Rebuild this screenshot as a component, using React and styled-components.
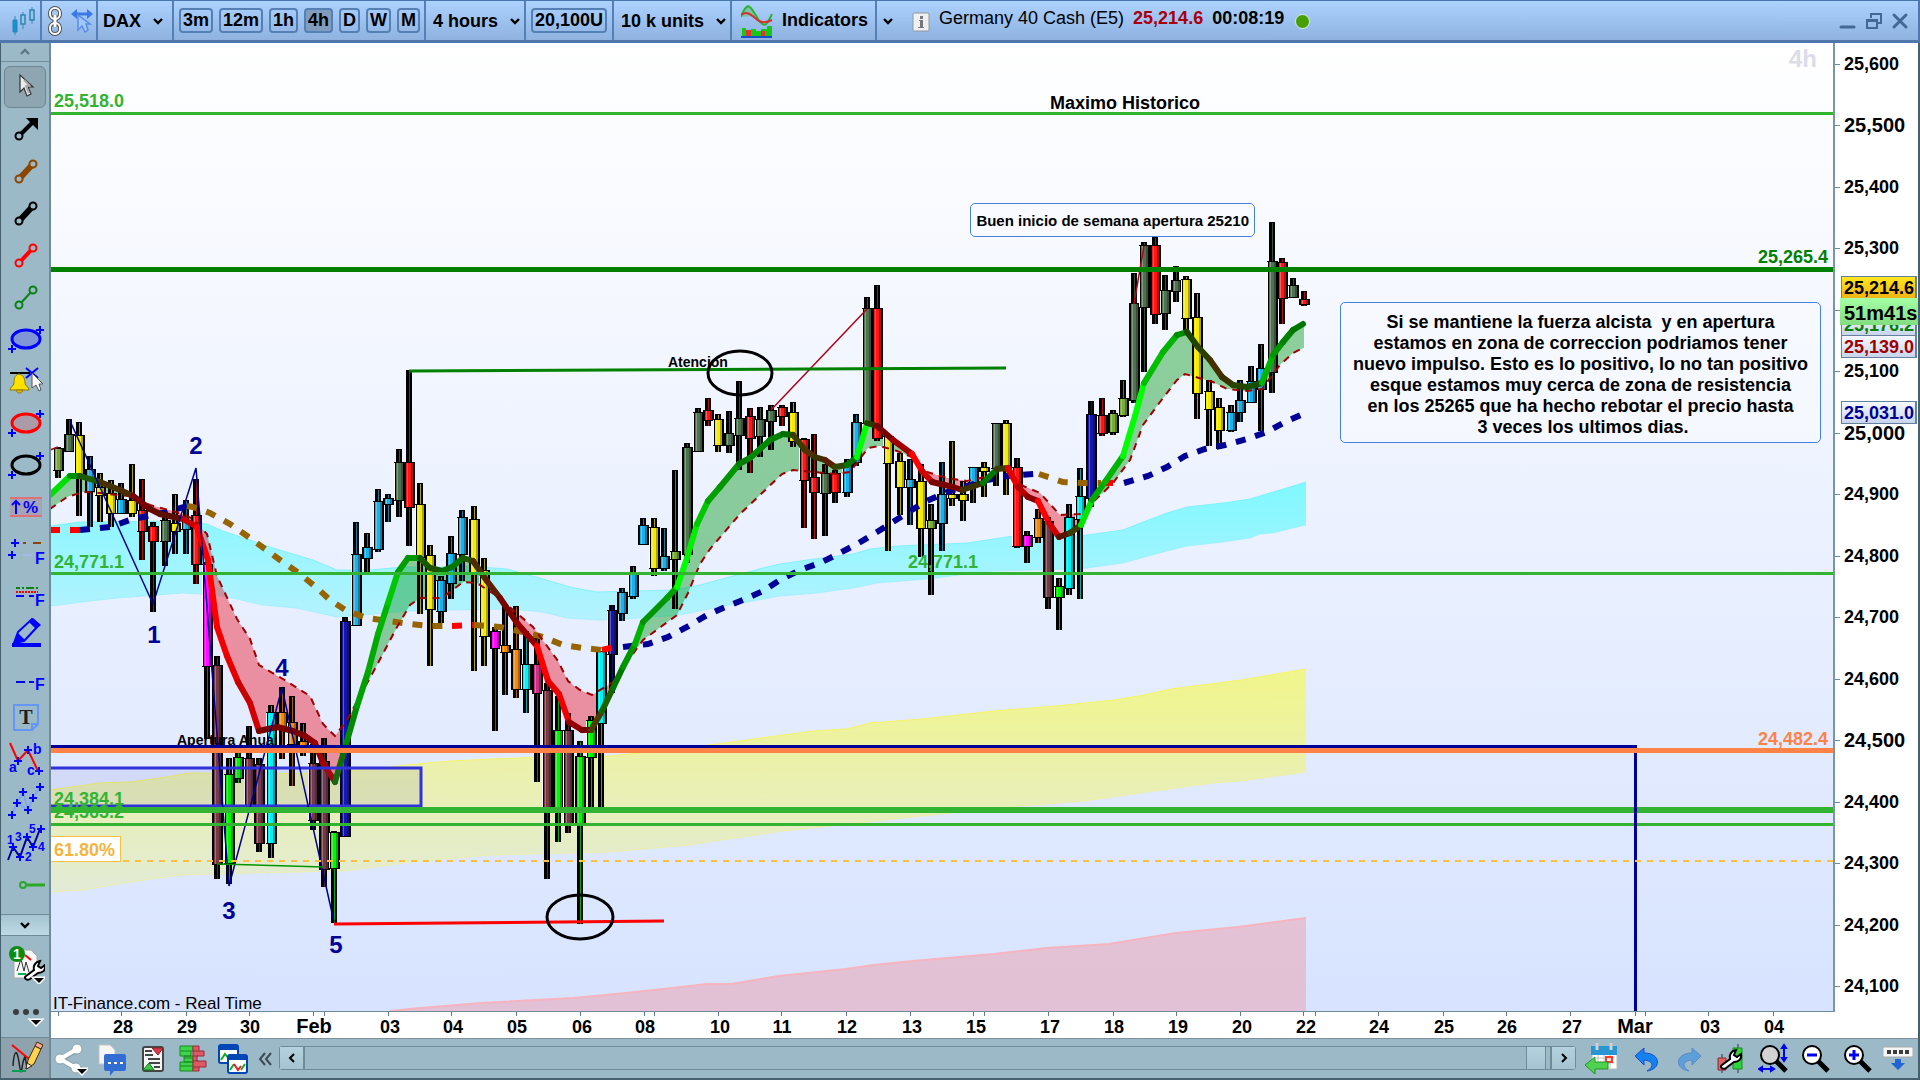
import React from "react";
import styled, { createGlobalStyle, css } from "styled-components";

const GlobalStyle = createGlobalStyle`
	* {
		box-sizing: border-box;
	}

	body {
		margin: 0;
		font-family: "Liberation Sans", Arial, sans-serif;
		color: #000;
	}

	button,
	select {
		font: inherit;
		color: inherit;
		margin: 0;
		padding: 0;
		border: 0;
		background: none;
	}

	svg {
		display: block;
	}
`;

/* ---------- chart data ---------- */

// plot area in chart units
const PLOT = { x: 51, y: 43, w: 1782, h: 968 };
const px = (x) => `${((x - PLOT.x) / PLOT.w) * 100}%`;
const py = (y) => `${((y - PLOT.y) / PLOT.h) * 100}%`;

const candleColors = {
	O: "#79aa3c",
	D: "#4f7350",
	Y: "#f4ea0a",
	B: "#20aee6",
	R: "#ff1616",
	M: "#ff0cff",
	W: "#753a44",
	L: "#05f505",
	C: "#08f0f4",
	A: "#f58a0a",
	N: "#1616aa",
	P: "#c83282",
};

// colour, x, high, body top, body bottom, low
const candles = [
	["O", 58, 447, 449, 470, 478],
	["D", 69, 419, 435, 451, 452],
	["Y", 79, 422, 436, 474, 516],
	["B", 90, 456, 470, 491, 527],
	["Y", 100, 473, 488, 495, 522],
	["Y", 111, 480, 494, 513, 527],
	["B", 121, 483, 500, 513, 513],
	["Y", 132, 464, 501, 513, 517],
	["R", 142, 479, 511, 531, 560],
	["R", 153, 522, 527, 541, 612],
	["D", 165, 517, 521, 541, 566],
	["Y", 175, 494, 524, 531, 554],
	["B", 186, 500, 521, 529, 554],
	["R", 196, 479, 516, 564, 584],
	["M", 207, 562, 565, 666, 739],
	["W", 217, 656, 666, 864, 879],
	["L", 229, 758, 775, 863, 884],
	["L", 238, 748, 758, 778, 783],
	["W", 249, 726, 759, 805, 808],
	["W", 259, 758, 765, 843, 852],
	["C", 271, 705, 713, 843, 858],
	["A", 282, 687, 713, 727, 759],
	["A", 292, 696, 723, 744, 786],
	["A", 303, 723, 742, 744, 756],
	["W", 313, 744, 764, 820, 830],
	["W", 324, 738, 762, 869, 887],
	["L", 334, 831, 833, 868, 923],
	["N", 345, 617, 622, 836, 837],
	["B", 356, 522, 555, 625, 626],
	["B", 367, 533, 548, 558, 572],
	["B", 378, 489, 502, 549, 552],
	["B", 388, 494, 499, 504, 522],
	["D", 399, 449, 463, 500, 517],
	["R", 409, 370, 463, 507, 546],
	["Y", 420, 483, 505, 557, 614],
	["Y", 430, 545, 556, 609, 666],
	["B", 441, 576, 581, 611, 623],
	["B", 451, 536, 554, 583, 599],
	["B", 462, 510, 518, 554, 581],
	["Y", 474, 506, 520, 572, 671],
	["Y", 484, 558, 571, 636, 666],
	["M", 495, 627, 632, 648, 731],
	["A", 505, 604, 646, 652, 695],
	["A", 516, 606, 650, 689, 698],
	["C", 526, 631, 665, 689, 713],
	["P", 537, 638, 665, 693, 782],
	["W", 547, 683, 691, 809, 879],
	["L", 558, 696, 731, 809, 842],
	["W", 568, 713, 731, 823, 833],
	["L", 580, 741, 757, 823, 924],
	["L", 591, 716, 721, 757, 809],
	["C", 601, 651, 652, 723, 808],
	["N", 612, 605, 611, 654, 693],
	["B", 622, 588, 593, 613, 621],
	["B", 633, 566, 575, 596, 599],
	["B", 643, 518, 526, 544, 544],
	["Y", 654, 518, 528, 568, 576],
	["B", 664, 528, 557, 568, 571],
	["O", 675, 470, 552, 559, 609],
	["D", 687, 443, 448, 554, 563],
	["D", 698, 408, 413, 451, 452],
	["R", 708, 398, 411, 420, 426],
	["Y", 718, 414, 420, 445, 452],
	["D", 729, 411, 434, 445, 453],
	["D", 739, 381, 419, 435, 470],
	["R", 750, 408, 417, 438, 473],
	["D", 760, 407, 420, 436, 457],
	["D", 771, 405, 411, 421, 450],
	["R", 782, 405, 408, 416, 426],
	["Y", 793, 402, 413, 441, 447],
	["R", 804, 438, 440, 480, 528],
	["R", 814, 434, 478, 492, 539],
	["D", 825, 464, 474, 493, 536],
	["R", 835, 470, 474, 492, 503],
	["B", 847, 459, 465, 492, 497],
	["B", 856, 414, 423, 462, 466],
	["D", 867, 297, 309, 423, 425],
	["R", 877, 285, 309, 438, 441],
	["Y", 888, 437, 437, 463, 551],
	["Y", 900, 453, 462, 487, 515],
	["B", 910, 459, 480, 487, 525],
	["Y", 921, 464, 482, 528, 557],
	["O", 931, 504, 521, 528, 595],
	["B", 942, 462, 495, 523, 551],
	["Y", 952, 441, 495, 497, 506],
	["Y", 963, 481, 495, 500, 521],
	["B", 973, 467, 468, 482, 503],
	["Y", 984, 462, 468, 471, 497],
	["D", 996, 423, 424, 468, 486],
	["Y", 1006, 420, 424, 468, 495],
	["R", 1017, 458, 468, 546, 548],
	["M", 1027, 531, 536, 546, 563],
	["A", 1038, 509, 519, 537, 543],
	["W", 1048, 517, 522, 597, 609],
	["L", 1059, 578, 587, 597, 630],
	["C", 1069, 504, 518, 588, 595],
	["C", 1080, 468, 497, 519, 599],
	["N", 1091, 401, 415, 498, 507],
	["R", 1102, 398, 416, 433, 436],
	["O", 1113, 410, 414, 432, 435],
	["O", 1123, 380, 399, 415, 417],
	["D", 1134, 273, 304, 400, 403],
	["D", 1144, 242, 246, 307, 372],
	["R", 1155, 237, 246, 314, 324],
	["D", 1165, 275, 291, 313, 330],
	["D", 1176, 266, 281, 291, 302],
	["Y", 1186, 276, 280, 318, 333],
	["Y", 1197, 293, 318, 393, 419],
	["Y", 1209, 380, 392, 409, 446],
	["Y", 1219, 398, 408, 430, 449],
	["B", 1231, 405, 413, 430, 432],
	["B", 1240, 380, 401, 412, 422],
	["B", 1251, 366, 382, 402, 403],
	["B", 1261, 344, 369, 389, 431],
	["D", 1272, 222, 262, 372, 393],
	["R", 1282, 258, 263, 298, 324],
	["D", 1293, 278, 286, 297, 298],
	["R", 1304, 291, 300, 304, 306],
];

// fast average: x, y, colour of the segment that ends here
const fastLine = [
	[50, 495, "#00e000"], [70, 476, "#00e000"], [80, 476, "#008c00"], [100, 482, "#1e5a00"],
	[120, 490, "#463200"], [133, 496, "#4b2d00"], [150, 509, "#780000"], [160, 514, "#640a00"],
	[183, 519, "#5a0f00"], [197, 527, "#c80000"], [208, 560, "#ff0000"], [217, 627, "#ff0000"],
	[227, 656, "#f50000"], [238, 682, "#e60000"], [250, 703, "#c80000"], [259, 731, "#d20000"],
	[277, 727, "#780000"], [293, 731, "#780000"], [305, 736, "#780000"], [315, 743, "#8c0000"],
	[323, 763, "#960000"], [335, 782, "#aa0000"], [345, 748, "#0f6e00"], [357, 706, "#008c00"],
	[368, 672, "#00a000"], [378, 634, "#00aa00"], [388, 603, "#00b400"], [398, 572, "#00c800"],
	[408, 558, "#00a000"], [420, 558, "#009600"], [430, 568, "#145a00"], [442, 571, "#1e5000"],
	[452, 567, "#006e00"], [463, 558, "#007800"], [473, 561, "#1e5a00"], [487, 581, "#4b2d00"],
	[500, 598, "#5f1e00"], [517, 623, "#780500"], [537, 646, "#960000"], [548, 681, "#ff0000"],
	[559, 694, "#e60000"], [569, 722, "#f00000"], [582, 730, "#960000"], [591, 730, "#780000"],
	[602, 711, "#4b3c00"], [613, 688, "#196400"], [623, 667, "#007800"], [635, 644, "#009600"],
	[643, 622, "#00b400"], [667, 598, "#009600"], [677, 587, "#00a000"], [687, 558, "#00ff00"],
	[697, 524, "#00f000"], [708, 501, "#00c800"], [720, 487, "#00a000"], [739, 464, "#009600"],
	[750, 458, "#007d00"], [770, 440, "#008700"], [783, 434, "#008200"], [793, 435, "#006e00"],
	[805, 450, "#3c3c00"], [815, 457, "#4b3200"], [825, 460, "#3c3200"], [835, 467, "#5a1e00"],
	[847, 465, "#324600"], [857, 457, "#007800"], [867, 423, "#00ff00"], [877, 426, "#283c00"],
	[893, 440, "#780000"], [912, 454, "#a00000"], [922, 471, "#ff0000"], [932, 482, "#d20000"],
	[953, 487, "#780000"], [962, 490, "#780000"], [983, 483, "#3c3200"], [997, 469, "#007800"],
	[1008, 468, "#3c3c00"], [1018, 487, "#e60000"], [1028, 497, "#b40000"], [1038, 501, "#8c0000"],
	[1049, 523, "#ff0000"], [1059, 537, "#d20000"], [1070, 533, "#5a1400"], [1081, 525, "#3c3c00"],
	[1092, 500, "#00e600"], [1105, 482, "#00aa00"], [1123, 456, "#00b400"], [1135, 416, "#00ff00"],
	[1144, 383, "#00ff00"], [1163, 352, "#00be00"], [1177, 335, "#00b400"], [1187, 332, "#008c00"],
	[1198, 347, "#1e4600"], [1210, 360, "#284100"], [1222, 377, "#463200"], [1233, 385, "#3c3200"],
	[1247, 387, "#284600"], [1262, 383, "#195000"], [1273, 355, "#00b400"], [1283, 342, "#009600"],
	[1293, 330, "#008200"], [1303, 324, "#007800"],
];

const signalLine = [
	[50, 509], [67, 497], [83, 492], [100, 493], [117, 495], [130, 496], [150, 505], [183, 514],
	[193, 519], [207, 534], [217, 576], [237, 619], [250, 639], [259, 665], [283, 679], [310, 696],
	[323, 724], [335, 736], [347, 720], [360, 696], [377, 665], [397, 627], [410, 605], [420, 598],
	[430, 598], [442, 598], [463, 582], [477, 583], [497, 596], [513, 610], [533, 627], [547, 646],
	[558, 661], [568, 681], [580, 690], [592, 695], [613, 682], [630, 658], [643, 640], [677, 615],
	[688, 593], [700, 564], [710, 549], [740, 514], [760, 495], [782, 474], [793, 470], [813, 472],
	[835, 474], [850, 472], [868, 448], [880, 446], [897, 451], [912, 457], [927, 472], [947, 478],
	[967, 481], [990, 476], [1000, 469], [1010, 472], [1023, 486], [1040, 493], [1060, 515],
	[1080, 514], [1090, 505], [1113, 483], [1130, 460], [1143, 425], [1160, 402], [1177, 380],
	[1185, 374], [1213, 382], [1227, 389], [1247, 391], [1262, 389], [1280, 365], [1293, 353],
	[1303, 348],
];

const slowLines = [
	{ color: "#ff0000", points: "50,530 80,530" },
	{ color: "#000096", points: "80,530 110,527 130,520 147,516 167,512 187,506" },
	{
		color: "#966400",
		points:
			"187,506 193,507 210,513 230,524 250,538 280,560 300,574 317,588 330,600 347,611 367,618 410,624 430,626 452,626",
	},
	{ color: "#ff0000", points: "452,626 474,625" },
	{ color: "#966400", points: "474,625 500,627 523,632 543,637 563,645 583,648 602,650" },
	{ color: "#ff0000", points: "602,650 614,647" },
	{
		color: "#000096",
		points:
			"623,647 648,644 668,637 687,627 707,615 723,608 743,600 763,591 780,580 800,570 820,563 838,554 857,544 877,532 893,522 910,511 927,501 947,492 967,486 987,480 1007,476 1034,474",
	},
	{ color: "#966400", points: "1039,474 1063,482 1083,483 1101,483" },
	{ color: "#ff0000", points: "1103,483 1114,483" },
	{
		color: "#000096",
		points:
			"1124,483 1148,476 1167,467 1185,456 1205,449 1225,445 1247,439 1267,432 1283,423 1303,414",
	},
];

const bands = {
	cyan: {
		top: "50,526 80,522 177,521 207,524 223,531 250,540 270,547 313,560 337,570 370,570 403,567 450,567 467,566 507,569 543,579 570,587 597,592 673,590 700,585 733,576 767,567 780,564 807,560 853,554 870,549 897,546 967,543 1013,536 1080,536 1123,530 1143,522 1167,513 1187,507 1223,503 1250,499 1293,486 1306,482",
		bottom:
			"1306,525 1293,528 1273,533 1260,534 1250,538 1223,542 1187,546 1163,552 1123,563 1080,569 993,571 967,574 927,579 877,583 853,588 817,593 780,596 747,602 713,608 680,615 640,618 600,620 567,618 543,612 510,609 450,610 410,611 363,615 337,617 297,608 263,605 237,599 217,595 183,593 117,598 90,601 50,606",
	},
	yellow: {
		top: "50,790 100,783 130,782 160,778 190,773 250,774 333,773 407,765 450,761 516,758 611,756 648,752 717,744 783,735 814,731 846,729 870,723 922,719 994,711 1056,706 1114,700 1144,695 1171,689 1241,680 1306,669",
		bottom:
			"1306,772 1241,781 1214,783 1176,788 1085,801 1008,807 913,817 831,826 783,831 688,845 611,852 492,855 420,861 343,871 250,873 180,875 130,882 83,890 50,892",
	},
	red: {
		top: "390,1011 420,1008 482,1003 573,998 616,994 654,990 707,984 731,984 779,976 846,969 874,965 913,961 994,954 1047,948 1109,944 1176,933 1238,927 1306,918",
		bottom: "1306,1011",
	},
};

const valueAt = (line, x) => {
	for (let i = 1; i < line.length; i++) {
		const [x0, y0] = line[i - 1];
		const [x1, y1] = line[i];
		if (x <= x1) return y0 + ((x - x0) / (x1 - x0)) * (y1 - y0);
	}
	return line[line.length - 1][1];
};

// splits the space between both averages wherever they cross
const buildClouds = () => {
	const clouds = [];
	let current = null;
	for (let x = 50; x <= 1304; x += 1) {
		const a = valueAt(fastLine, x);
		const b = valueAt(signalLine, x);
		const up = a <= b;
		if (!current || current.up !== up) {
			current = { up, top: [], bottom: [] };
			clouds.push(current);
		}
		current.top.push(`${x},${Math.round(a)}`);
		current.bottom.unshift(`${x},${Math.round(b)}`);
	}
	return clouds;
};

const clouds = buildClouds();

const priceLabels = [
	25600, 25500, 25400, 25300, 25200, 25100, 25000, 24900, 24800, 24700, 24600, 24500, 24400,
	24300, 24200, 24100,
];

const timeLabels = [
	["28", 123], ["29", 187], ["30", 250], ["Feb", 314], ["03", 390], ["04", 453], ["05", 517],
	["06", 582], ["08", 645], ["10", 720], ["11", 782], ["12", 847], ["13", 912], ["15", 976],
	["17", 1050], ["18", 1114], ["19", 1178], ["20", 1242], ["22", 1306], ["24", 1379],
	["25", 1444], ["26", 1507], ["27", 1572], ["Mar", 1635], ["03", 1710], ["04", 1774],
];

const timeTicks = [
	58, 121, 186, 249, 313, 324, 388, 451, 516, 580, 644, 654, 718, 781, 846, 910, 973, 984, 1048,
	1113, 1176, 1240, 1303, 1315, 1378, 1443, 1506, 1570, 1635, 1645, 1708, 1773,
];

/* ---------- icons ---------- */

const Plus = ({ x, y, color = "#0000ff" }) => (
	<path d={`M${x - 4} ${y}h8M${x} ${y - 4}v8`} stroke={color} strokeWidth="2" />
);

const Icon = ({ w = 40, h = 40, children }) => (
	<svg width={w} height={h} viewBox={`0 0 ${w} ${h}`} fill="none" aria-hidden="true">
		{children}
	</svg>
);

const Chevron = ({ up, color = "#000", size = 12 }) => (
	<svg width={size} height="8" viewBox="0 0 12 8" fill="none" aria-hidden="true">
		<path d={up ? "M2 6l4-4 4 4" : "M2 2l4 4 4-4"} stroke={color} strokeWidth="2.4" />
	</svg>
);

const Segment = ({ color, width }) => (
	<Icon>
		<path d="M15 27L27 14" stroke={color} strokeWidth={width} />
		<circle cx="14" cy="28" r="3.5" fill="#9bb9c7" stroke={color} strokeWidth="2" />
		<circle cx="28" cy="13" r="3.5" fill="#9bb9c7" stroke={color} strokeWidth="2" />
	</Icon>
);

const EllipseTool = ({ color, fill = "none" }) => (
	<Icon>
		<ellipse cx="21" cy="20" rx="14" ry="9" fill={fill} stroke={color} strokeWidth="3" />
		<Plus x={35} y={11} />
		<Plus x={7} y={30} />
	</Icon>
);

const Letter = ({ x, y, size = 16, color = "#0000ff", children }) => (
	<text x={x} y={y} fill={color} fontSize={size} fontWeight="bold">
		{children}
	</text>
);

const tools = [
	{
		name: "Select",
		active: true,
		icon: (
			<Icon>
				<path
					d="M15 8v17l4-4 3 8 4-2-3-7h5z"
					fill="#ececec"
					stroke="#333"
					strokeWidth="1.2"
				/>
				<path d="M19 13l5 5-3 1 3 7" stroke="#aaa" strokeWidth="2" />
			</Icon>
		),
	},
	{
		name: "Arrow",
		icon: (
			<Icon>
				<path d="M16 25L29 12" stroke="#000" strokeWidth="4" />
				<path d="M21 9h12v12z" fill="#000" />
				<circle cx="14" cy="27" r="3.5" fill="#9bb9c7" stroke="#000" strokeWidth="2" />
			</Icon>
		),
	},
	{ name: "Brown segment", icon: <Segment color="#8c4600" width="6" /> },
	{ name: "Black segment", icon: <Segment color="#000" width="6" /> },
	{ name: "Red segment", icon: <Segment color="#ff0000" width="4" /> },
	{ name: "Green segment", icon: <Segment color="#0a8214" width="2" /> },
	{ name: "Blue ellipse", icon: <EllipseTool color="#0000ff" fill="#7f95d6" /> },
	{
		name: "Alert",
		icon: (
			<Icon>
				<path d="M5 12h20" stroke="#000" strokeWidth="2" />
				<path
					d="M14 13c-5 1-5 6-5 9 0 3-4 4-4 7h19c0-3-4-4-4-7 0-3-1-8-6-9z"
					fill="#ffe000"
					stroke="#8c7800"
				/>
				<path d="M11 29c1 4 6 4 7 0z" fill="#e6b400" stroke="#8c7800" />
				<path d="M21 7l12 10M33 7L21 17" stroke="#0000ff" strokeWidth="2" />
				<path d="M27 12v15l4-3 3 6 2-1-2-6h4z" fill="#fff" stroke="#555" />
			</Icon>
		),
	},
	{ name: "Red ellipse", icon: <EllipseTool color="#ff0000" fill="#ab9aa8" /> },
	{ name: "Black ellipse", icon: <EllipseTool color="#000" /> },
	{
		name: "Percentage",
		icon: (
			<Icon>
				<path d="M5 11h32v18H5z" fill="#a3a4b4" />
				<path d="M5 11h32M5 29h32" stroke="#e07078" strokeWidth="2" />
				<path d="M11 27V14M7 18l4-4 4 4" stroke="#0000ff" strokeWidth="2" />
				<Letter x={18} y={26} size={17}>
					%
				</Letter>
			</Icon>
		),
	},
	{
		name: "Horizontal lines",
		icon: (
			<Icon>
				<Plus x={10} y={14} />
				<Plus x={7} y={26} />
				<path d="M18 14h3M28 14h8" stroke="#8c4600" strokeWidth="2" />
				<path d="M18 26h9" stroke="#a5b9f0" strokeWidth="2" />
				<Letter x={30} y={35}>
					F
				</Letter>
			</Icon>
		),
	},
	{
		name: "Line styles",
		icon: (
			<Icon>
				<path d="M11 17h22" stroke="#0a8214" strokeWidth="2" strokeDasharray="4 2 2 2 8 2" />
				<path d="M11 21h22" stroke="#ff0000" strokeWidth="2" strokeDasharray="2 1" />
				<path d="M11 25h8M24 25h5" stroke="#0000ff" strokeWidth="2" />
				<Letter x={30} y={35}>
					F
				</Letter>
			</Icon>
		),
	},
	{
		name: "Pencil",
		icon: (
			<Icon>
				<path d="M7 30h29v4H7z" fill="#0000ff" />
				<path d="M9 30l4-11L27 6l7 6-15 16z" fill="#9bb9c7" stroke="#0000ff" strokeWidth="2" />
				<path d="M24 9l4-4 8 7-5 4zM9 31l4-11 7 7z" fill="#0000ff" />
			</Icon>
		),
	},
	{
		name: "Dashed line",
		icon: (
			<Icon>
				<path d="M11 27h9M24 27h5" stroke="#0000ff" strokeWidth="2" />
				<Letter x={30} y={35}>
					F
				</Letter>
			</Icon>
		),
	},
	{
		name: "Text",
		icon: (
			<Icon>
				<path d="M9 8h24v19l-6 6H9zM27 33v-6h6" stroke="#6496f5" strokeWidth="2" />
				<text
					x="21"
					y="27"
					fontSize="20"
					fontWeight="bold"
					fontFamily="Liberation Serif, serif"
					textAnchor="middle"
					fill="#1e1e1e"
				>
					T
				</text>
			</Icon>
		),
	},
	{
		name: "ABC pattern",
		icon: (
			<Icon>
				<path d="M5 4l8 18 10-11 10 21" stroke="#ff0000" strokeWidth="2" />
				<Plus x={13} y={22} />
				<Plus x={23} y={11} />
				<Plus x={34} y={32} />
				<Letter x={4} y={33} size={14}>
					a
				</Letter>
				<Letter x={28} y={15} size={14}>
					b
				</Letter>
				<Letter x={22} y={36} size={14}>
					c
				</Letter>
			</Icon>
		),
	},
	{
		name: "Polyline",
		icon: (
			<Icon>
				<path d="M7 34l5-12 11 7-5-18M23 29l5-12 7-11M12 22l6-11" stroke="#7fa5f5" strokeWidth="2" />
				<Plus x={7} y={34} />
				<Plus x={12} y={22} />
				<Plus x={18} y={11} />
				<Plus x={23} y={29} />
				<Plus x={28} y={17} />
				<Plus x={35} y={6} />
			</Icon>
		),
	},
	{
		name: "Elliott waves",
		icon: (
			<Icon>
				<path d="M3 37l5-13 7 10 7-20 6 10 7-18" stroke="#000096" strokeWidth="2" />
				<Plus x={8} y={24} />
				<Plus x={15} y={34} />
				<Plus x={22} y={14} />
				<Plus x={28} y={24} />
				<Plus x={36} y={6} />
				<Letter x={2} y={21} size={12}>
					1
				</Letter>
				<Letter x={10} y={18} size={12}>
					3
				</Letter>
				<Letter x={24} y={10} size={12}>
					5
				</Letter>
				<Letter x={33} y={28} size={12}>
					4
				</Letter>
				<Letter x={20} y={38} size={12}>
					2
				</Letter>
			</Icon>
		),
	},
	{
		name: "Horizontal ray",
		icon: (
			<Icon>
				<path d="M22 20h18" stroke="#28aa28" strokeWidth="3" />
				<circle cx="18" cy="20" r="3" stroke="#28aa28" strokeWidth="2" />
			</Icon>
		),
	},
];

const Wrench = ({ x = 0, y = 0 }) => (
	<path
		transform={`translate(${x} ${y})`}
		d="M2 16l8-6c-1-4 1-8 6-9l-2 5 3 2 4-3c1 5-2 8-7 8l-8 6c-3 2-7-1-4-3z"
		fill="#fff"
		stroke="#000"
		strokeWidth="2"
	/>
);

const DownMark = ({ x, y }) => (
	<path
		d={`M${x - 5} ${y - 2}h10l-5 5z`}
		fill="#000"
		stroke="#fff"
		strokeWidth="3"
		paintOrder="stroke"
	/>
);

const TemplateIcon = () => (
	<Icon>
		<path d="M12 6h14l6 6v22H9V8z" fill="#f8f8f8" stroke="#aaa" />
		<path d="M20 11l6 5" stroke="#ff0000" strokeWidth="2" />
		<path d="M12 27l4-12 3 12 2-9 3 10" stroke="#333" />
		<path d="M13 30h8" stroke="#00b450" strokeWidth="2" />
		<circle cx="12" cy="10" r="8" fill="#0a8c14" />
		<Letter x={8} y={15} size={14} color="#fff">
			1
		</Letter>
		<Wrench x={19} y={16} />
		<DownMark x={34} y={36} />
	</Icon>
);

const DotsIcon = () => (
	<Icon w={40} h={24}>
		<circle cx="11" cy="9" r="3" fill="#3c3c3c" />
		<circle cx="21" cy="9" r="3" fill="#3c3c3c" />
		<circle cx="31" cy="9" r="3" fill="#3c3c3c" />
		<DownMark x={31} y={19} />
	</Icon>
);

const DrawIcon = () => (
	<Icon w={36} h={36}>
		<path d="M6 26c1-16 4-18 6-4s2 12 4 0l2-6 2 12" stroke="#222" strokeWidth="1.5" />
		<path d="M5 5l17 14" stroke="#ff0000" strokeWidth="2" />
		<path d="M5 31h14" stroke="#00a050" strokeWidth="2" />
		<path d="M19 29l2-9L28 6l6 3-7 15z" fill="#ffd250" stroke="#3c280a" />
		<path d="M28 6l2-4 6 3-2 4z" fill="#ffaa96" stroke="#3c280a" />
		<path d="M19 29l1-6 5 3z" fill="#eee" stroke="#3c280a" />
	</Icon>
);

const CandlesLogo = () => (
	<Icon w={24} h={30}>
		<path d="M4 10v19M12 6v17M21 1v17" stroke="#328cb9" />
		<path d="M2 14h4v12H2z" fill="#0a96d2" stroke="#3282af" />
		<path d="M10 9h4v9h-4zM19 4h4v10h-4z" fill="#96c8eb" stroke="#3282af" strokeWidth="1.5" />
	</Icon>
);

const LinkIcon = () => (
	<Icon w={16} h={32}>
		<g stroke="#555" strokeWidth="4">
			<rect x="3" y="3" width="10" height="11" rx="5" />
			<rect x="3" y="18" width="10" height="11" rx="5" />
			<path d="M8 10v12" strokeWidth="5" />
		</g>
		<g stroke="#fff" strokeWidth="2">
			<rect x="3" y="3" width="10" height="11" rx="5" />
			<rect x="3" y="18" width="10" height="11" rx="5" />
			<path d="M8 10v12" strokeWidth="3" />
		</g>
	</Icon>
);

const CrosshairIcon = () => (
	<Icon w={22} h={26}>
		<path d="M3 6h16" stroke="#3c78e6" strokeWidth="3" />
		<path d="M0 6l6-5v10zM22 6l-6-5v10z" fill="#3c78e6" />
		<path d="M7 7v15l4-4 3 6 3-2-2-6h4z" fill="#a0c8fa" stroke="#5a8ce6" strokeWidth="1.5" />
	</Icon>
);

const IndicatorsIcon = () => (
	<Icon w={32} h={34}>
		<path d="M0 13C7-4 9 3 15 12z" fill="#7dc3aa" />
		<path d="M0 13C7-6 10 4 17 15s9 5 14-5" stroke="#28b428" strokeWidth="2" />
		<path d="M0 11c7-6 13 3 18 6 4 2 9 1 13-1" stroke="#d23232" strokeWidth="2" />
		<path d="M1 33v-9h4v3h5v-2h5v2h5v-2h6v-3h5v11z" fill="#14c814" />
		<path d="M5 26h5v6H5zM20 27h4v5h-4z" fill="#e63232" />
		<path d="M0 33h31" stroke="#1450c8" strokeWidth="2" />
	</Icon>
);

const InfoIcon = () => (
	<Icon w={18} h={20}>
		<rect x="1" y="1" width="16" height="18" rx="1" fill="#eef0f2" stroke="#969696" />
		<path d="M8 4h3v3H8zM7 8h4v7h1v1H6v-1h2V9H7z" fill="#787878" />
	</Icon>
);

const ShareIcon = () => (
	<Icon w={34} h={34}>
		<path d="M24 7L7 17l16 10" stroke="#8ba1ac" strokeWidth="6" />
		<g fill="#fff" stroke="#8ba1ac">
			<circle cx="23" cy="7" r="5" />
			<circle cx="6" cy="17" r="5" />
			<circle cx="22" cy="26" r="5" />
		</g>
		<path d="M23 7L6 17l16 9" stroke="#fff" strokeWidth="4" />
		<DownMark x={28} y={29} />
	</Icon>
);

const ChatIcon = () => (
	<Icon w={30} h={34}>
		<path d="M2 3h11l5 5v14H2z" fill="#f5f5f5" stroke="#c3c3c3" />
		<path d="M9 12h18q2 0 2 2v13q0 2-2 2H17l-4 5v-5H9q-2 0-2-2V14q0-2 2-2z" fill="#326ed2" />
		<path d="M11 20h3v2h-3zM17 20h3v2h-3zM23 20h3v2h-3z" fill="#fff" />
	</Icon>
);

const ReportIcon = () => (
	<Icon w={24} h={26}>
		<rect x="2" y="1" width="20" height="24" rx="2" fill="#f5f5f5" stroke="#444" strokeWidth="2" />
		<path d="M4 5h7M4 9h8M7 13h12M8 17h11M13 21h6" stroke="#444" strokeWidth="2" />
		<path d="M11 2h11l-5 7z" fill="#dc3c46" stroke="#8c1e28" />
		<path d="M2 24h11l-5-7z" fill="#3cc846" stroke="#14781e" />
	</Icon>
);

const DepthIcon = () => (
	<Icon w={28} h={28}>
		<path d="M1 1h13v5h-2v5H1zM5 11h9v6H5zM1 17h13v9H1z" fill="#41d24b" stroke="#148c1e" />
		<path d="M14 1h6v5h5v5h-7v5h9v6h-7v4h-6z" fill="#dc5a64" stroke="#a0283c" />
		<path d="M2 6h10M5 13h8M1 21h12" stroke="#148c1e" />
		<path d="M14 6h6M14 11h5M14 16h5M14 22h6" stroke="#a0283c" />
	</Icon>
);

const WindowsIcon = () => (
	<Icon w={30} h={30}>
		<rect x="1" y="1" width="19" height="18" rx="2" fill="#fff" stroke="#0046b4" strokeWidth="2" />
		<path d="M1 2h19v4H1z" fill="#0046b4" />
		<path d="M3 16l4-6 4 5" stroke="#14aa28" strokeWidth="2" />
		<rect x="10" y="11" width="19" height="18" rx="2" fill="#fff" stroke="#0046b4" strokeWidth="2" />
		<path d="M10 12h19v4H10z" fill="#0046b4" />
		<path d="M12 26l4-6M23 26l4-6" stroke="#14aa28" strokeWidth="2" />
		<path d="M16 20l4 6 3-4" stroke="#e61e1e" strokeWidth="2" />
	</Icon>
);

const CalendarIcon = () => (
	<Icon w={34} h={32}>
		<path d="M8 10h25v16H8z" fill="#fff" stroke="#bbb" />
		<path d="M12 15h18M12 20h18M14 11v14M20 11v14M26 11v14" stroke="#c3c3c3" />
		<path d="M7 3h26v9H7z" fill="#2896d2" />
		<path d="M13 0v7M27 0v7" stroke="#d2d2d2" strokeWidth="3" />
		<path d="M22 14h6v5h-6z" stroke="#ff3c28" strokeWidth="2" />
		<path d="M1 22l10-8v5h13v7H11v5z" fill="#50d250" stroke="#1e9628" />
	</Icon>
);

const UndoIcon = ({ flip }) => (
	<Icon w={28} h={28}>
		<g transform={flip ? "translate(28 0) scale(-1 1)" : undefined} opacity={flip ? 0.45 : 1}>
			<path d="M2 11l9-8v5c17 0 18 16 3 18 7-4 7-10-3-11v5z" fill="#1482f0" stroke="#1450c8" />
		</g>
	</Icon>
);

const SettingsIcon = () => (
	<Icon w={30} h={32}>
		<path d="M6 11v19M22 1v29" stroke="#333" />
		<path d="M2 15h8v12H2z" fill="#dc6464" stroke="#8c2832" />
		<path d="M17 5h9v21h-9z" fill="#32d23c" stroke="#148c1e" />
		<Wrench x={4} y={6} />
	</Icon>
);

const ZoomIcon = ({ sign }) => (
	<Icon w={30} h={32}>
		<path d="M18 18l10 10" stroke="#000" strokeWidth="5" />
		<circle cx="12" cy="12" r="9" fill={sign ? "#fff" : "#d2d2d2"} stroke="#000" strokeWidth="2" />
		{sign && <path d="M7 12h10" stroke="#0000f0" strokeWidth="3" />}
		{sign === "+" && <path d="M12 7v10" stroke="#0000f0" strokeWidth="3" />}
		{!sign && (
			<g stroke="#0000f0" strokeWidth="2" fill="#0000f0">
				<path d="M26 5v10M4 26h9" />
				<path d="M24 5l2-3 2 3zM24 15l2 3 2-3zM4 24l-3 2 3 2zM13 24l3 2-3 2z" />
			</g>
		)}
	</Icon>
);

const KeyboardIcon = () => (
	<Icon w={30} h={30}>
		<rect x="0" y="3" width="30" height="10" rx="1" fill="#f5f5f5" stroke="#aaa" />
		<path d="M4 6h4v4H4zM10 6h4v4h-4zM16 6h4v4h-4zM22 6h4v4h-4z" fill="#3c3c3c" />
		<path d="M12 15h6v4h4l-7 7-7-7h4z" fill="#1e64d2" />
	</Icon>
);

/* ---------- parts ---------- */

const IconSelect = ({ label, value }) => (
	<Picker>
		<select aria-label={label} defaultValue={value}>
			<option>{value}</option>
		</select>
		<Chevron />
	</Picker>
);

function TopBar() {
	return (
		<Toolbar>
			<ToolGroup $w="42px" $center>
				<PlainButton aria-label="Chart type">
					<CandlesLogo />
				</PlainButton>
			</ToolGroup>
			<ToolGroup $w="56px" $gap="8px">
				<PlainButton aria-label="Link charts">
					<LinkIcon />
				</PlainButton>
				<PlainButton aria-label="Crosshair">
					<CrosshairIcon />
				</PlainButton>
			</ToolGroup>
			<ToolGroup $w="76px">
				<IconSelect label="Instrument" value="DAX" />
			</ToolGroup>
			<ToolGroup $w="252px" $gap="6px">
				{["3m", "12m", "1h", "4h", "D", "W", "M"].map((t) => (
					<FrameButton key={t} $active={t === "4h"}>
						{t}
					</FrameButton>
				))}
			</ToolGroup>
			<ToolGroup $w="100px" $pad="7px">
				<IconSelect label="Timeframe" value="4 hours" />
			</ToolGroup>
			<ToolGroup $w="88px">
				<FrameButton>20,100U</FrameButton>
			</ToolGroup>
			<ToolGroup $w="118px" $pad="7px">
				<IconSelect label="Units" value="10 k units" />
			</ToolGroup>
			<ToolGroup $w="145px" $gap="9px" $pad="9px">
				<IndicatorsIcon />
				<PlainButton>Indicators</PlainButton>
			</ToolGroup>
			<ToolGroup $last $pad="5px" $gap="18px">
				<PlainButton aria-label="More indicators">
					<Chevron />
				</PlainButton>
				<Instrument>
					<PlainButton aria-label="Information">
						<InfoIcon />
					</PlainButton>
					<span>Germany 40 Cash (E5)</span>
					<LastPrice>25,214.6</LastPrice>
					<strong>00:08:19</strong>
					<StatusDot />
				</Instrument>
			</ToolGroup>
			<WindowButtons>
				<PlainButton aria-label="Minimize">
					<Icon w={18} h={18}>
						<path d="M2 15h13" stroke="#426895" strokeWidth="3" strokeLinecap="round" />
					</Icon>
				</PlainButton>
				<PlainButton aria-label="Restore">
					<Icon w={18} h={18}>
						<path d="M6 6V2h10v9h-4M5 2h12" stroke="#426895" strokeWidth="2" />
						<path d="M2 8h10v8H2zM2 9h10" stroke="#426895" strokeWidth="2" />
					</Icon>
				</PlainButton>
				<PlainButton aria-label="Close">
					<Icon w={18} h={18}>
						<path
							d="M3 3l12 12M15 3L3 15"
							stroke="#426895"
							strokeWidth="3"
							strokeLinecap="round"
						/>
					</Icon>
				</PlainButton>
			</WindowButtons>
		</Toolbar>
	);
}

function SideBar() {
	return (
		<Aside>
			<CollapseButton aria-label="Scroll up">
				<Chevron up color="#607883" />
			</CollapseButton>
			<ToolList>
				{tools.map((tool) => (
					<li key={tool.name}>
						<ToolButton aria-label={tool.name} $active={tool.active}>
							{tool.icon}
						</ToolButton>
					</li>
				))}
			</ToolList>
			<MoreButton aria-label="Scroll down">
				<Chevron />
			</MoreButton>
			<SideButton aria-label="Templates" $h="56px">
				<TemplateIcon />
			</SideButton>
			<SideButton aria-label="More options" $h="45px">
				<DotsIcon />
			</SideButton>
			<SideButton aria-label="Drawing tools" $h="41px" $dark>
				<DrawIcon />
			</SideButton>
		</Aside>
	);
}

function Candle({ data, shifted }) {
	const [kind, x, high, top, bottom, low] = data;
	const color = candleColors[kind];
	const height = Math.max(bottom - top, 3);
	return (
		<g>
			<rect x={x - 3} y={high} width="6" height={low - high} fill="#000" />
			<rect x={x} y={high + 1} width="1" height={low - high - 1} fill={color} opacity="0.7" />
			<rect x={x - 5} y={top - 1} width="11" height={height + 2} fill="#000" />
			{shifted && <rect x={x - 5} y={top} width="1" height={height} fill="#fff" />}
			<rect x={x - 3} y={top} width="7" height={height} fill={color} />
			<rect x={x - 2} y={top} width="1" height={height} fill="#fff" opacity="0.3" />
			<rect x={x + 2} y={top} width="2" height={height} fill="#000" opacity="0.3" />
		</g>
	);
}

const Plot = ({ children }) => (
	<svg
		width="100%"
		height="100%"
		viewBox={`${PLOT.x} ${PLOT.y} ${PLOT.w} ${PLOT.h}`}
		preserveAspectRatio="none"
	>
		{children}
	</svg>
);

function Chart() {
	return (
		<ChartArea>
			<ChartSvg role="img" aria-label="DAX 4 hours chart">
				<Plot>
					<defs>
						<linearGradient id="cyanBand" x1="0" y1="0" x2="0" y2="1">
							<stop offset="0" stopColor="#00ffff" stopOpacity="0.46" />
							<stop offset="1" stopColor="#00ffff" stopOpacity="0.22" />
						</linearGradient>
						<linearGradient id="yellowBand" x1="0" y1="0" x2="0" y2="1">
							<stop offset="0" stopColor="#ffff00" stopOpacity="0.46" />
							<stop offset="1" stopColor="#ffff00" stopOpacity="0.16" />
						</linearGradient>
					</defs>
					<polygon points={`${bands.cyan.top} ${bands.cyan.bottom}`} fill="url(#cyanBand)" />
					<polyline points={bands.cyan.top} fill="none" stroke="#6ef0fa" opacity="0.7" />
					<polyline points={bands.cyan.bottom} fill="none" stroke="#96f0fa" opacity="0.7" />
					<polygon points={`${bands.yellow.top} ${bands.yellow.bottom}`} fill="url(#yellowBand)" />
					<polyline points={bands.yellow.top} fill="none" stroke="#f5f564" />
					<polyline points={bands.yellow.bottom} fill="none" stroke="#f0f096" opacity="0.7" />
					<polygon
						points={`${bands.red.top} ${bands.red.bottom}`}
						fill="#ff6464"
						fillOpacity="0.27"
					/>
					<polyline points={bands.red.top} fill="none" stroke="#f5b4be" strokeWidth="2" />

					{clouds.map((cloud, i) => (
						<polygon
							key={i}
							points={[...cloud.top, ...cloud.bottom].join(" ")}
							fill={cloud.up ? "#009614" : "#f00f1e"}
							fillOpacity="0.42"
						/>
					))}

					<g shapeRendering="crispEdges">
						{candles.map((data, i) => (
							<Candle key={data[1]} data={data} shifted={i % 2 === 0} />
						))}
					</g>

					{slowLines.map((line) => (
						<polyline
							key={line.points}
							points={line.points}
							fill="none"
							stroke={line.color}
							strokeWidth="6"
							strokeDasharray="10 10"
						/>
					))}
					<polyline
						points={signalLine.map((p) => p.join(",")).join(" ")}
						fill="none"
						stroke="#a00000"
						strokeWidth="2"
						strokeDasharray="7 6"
					/>
					<g strokeWidth="6" strokeLinecap="round">
						{fastLine.slice(1).map(([x, y, color], i) => (
							<line key={x} x1={fastLine[i][0]} y1={fastLine[i][1]} x2={x} y2={y} stroke={color} />
						))}
					</g>
					<rect
						x="40"
						y="768"
						width="381"
						height="38"
						fill="#5050b4"
						fillOpacity="0.1"
						stroke="#3232dc"
						strokeWidth="3"
					/>
				</Plot>

				<ChartText x={px(54)} y={py(818)} $color="#32b432">
					24,363.2
				</ChartText>
				<ChartText x={px(668)} y={py(367)} $size={14}>
					Atencion
				</ChartText>
				<ChartText x={px(177)} y={py(745)} $size={14}>
					Apertura Anual
				</ChartText>

				<Plot>
					<polyline
						points="70,421 153,604 196,468 229,886 282,688 334,922"
						fill="none"
						stroke="#00008c"
						strokeWidth="1.5"
					/>
					<path d="M217 864L324 867" stroke="#009600" strokeWidth="1.5" />
					<path
						d="M50 450l8-3M771 410l96-101M1134 304l10-58"
						stroke="#b40014"
						strokeWidth="1.5"
						fill="none"
					/>
					<path d="M409 371L1006 368" stroke="#008000" strokeWidth="3" />
					<path d="M334 924L664 921" stroke="#ff0000" strokeWidth="3" />
					<g fill="none" stroke="#000" strokeWidth="3">
						<ellipse cx="740" cy="373" rx="32" ry="22" />
						<ellipse cx="580" cy="917" rx="33" ry="22" />
					</g>

					<g shapeRendering="crispEdges">
						<rect x="40" y="112" width="1800" height="3" fill="#32b432" />
						<rect x="40" y="267" width="1800" height="5" fill="#008000" />
						<rect x="40" y="572" width="1800" height="3" fill="#32b432" />
						<rect x="40" y="745" width="1597" height="3" fill="#000096" />
						<rect x="40" y="807" width="1800" height="6" fill="#32b432" />
						<rect x="40" y="823" width="1800" height="3" fill="#32b432" />
						<rect x="1634" y="750" width="3" height="270" fill="#000096" />
						<rect x="40" y="748" width="1800" height="5" fill="#ff8246" />
						<path d="M51 861H1840" stroke="#ffc040" strokeWidth="2" strokeDasharray="6 6" />
						<rect x="45" y="836" width="75" height="25" fill="#fff" stroke="#ffc040" />
					</g>
				</Plot>

				<ChartText x={px(54)} y={py(107)} $color="#32b432">
					25,518.0
				</ChartText>
				<ChartText x={px(54)} y={py(568)} $color="#32b432">
					24,771.1
				</ChartText>
				<ChartText x={px(908)} y={py(568)} $color="#32b432">
					24,771.1
				</ChartText>
				<ChartText x={px(54)} y={py(805)} $color="#32b432">
					24,384.1
				</ChartText>
				<ChartText x={px(54)} y={py(856)} $color="#f5b43c">
					61.80%
				</ChartText>
				<ChartText x={px(1828)} y={py(263)} $color="#008000" textAnchor="end">
					25,265.4
				</ChartText>
				<ChartText x={px(1828)} y={py(745)} $color="#ff8246" textAnchor="end">
					24,482.4
				</ChartText>
				<ChartText x={px(1125)} y={py(109)} textAnchor="middle">
					Maximo Historico
				</ChartText>
				<ChartText x={px(1817)} y={py(67)} $size={24} $color="#dcdce8" textAnchor="end">
					4h
				</ChartText>
				{[
					["1", 154, 643],
					["2", 196, 454],
					["3", 229, 919],
					["4", 282, 676],
					["5", 336, 953],
				].map(([n, x, y]) => (
					<ChartText key={n} x={px(x)} y={py(y)} $size={24} $color="#000096" textAnchor="middle">
						{n}
					</ChartText>
				))}
				<ChartText x={px(53)} y={py(1009)} $size={17} $weight="normal">
					IT-Finance.com - Real Time
				</ChartText>
			</ChartSvg>

			<Note $top="160px" $right="578px" $size="15px" $line="18px" $pad="8px 5px 6px">
				Buen inicio de semana apertura 25210
			</Note>
			<Note $top="259px" $right="12px" $size="18px" $line="21px" $pad="9px 12px 4px">
				{"Si se mantiene la fuerza alcista  y en apertura\n"}
				{"estamos en zona de correccion podriamos tener\n"}
				{"nuevo impulso. Esto es lo positivo, lo no tan positivo\n"}
				{"esque estamos muy cerca de zona de resistencia\n"}
				{"en los 25265 que ha hecho rebotar el precio hasta\n"}
				{" 3 veces los ultimos dias."}
			</Note>
		</ChartArea>
	);
}

function PriceAxis() {
	return (
		<PriceColumn>
			{priceLabels.map((p) => (
				<PriceLabel key={p} $major={p % 500 === 0}>
					{p.toLocaleString("en-US")}
				</PriceLabel>
			))}
			<PriceTag $top="270px" $color="#008000">
				25,176.2
			</PriceTag>
			<PriceTag $top="233px" $gold>
				25,214.6
			</PriceTag>
			<PriceTag $top="292px" $color="#a00000">
				25,139.0
			</PriceTag>
			<PriceTag $top="358px" $color="#000096">
				25,031.0
			</PriceTag>
			<Countdown>51m41s</Countdown>
		</PriceColumn>
	);
}

function TimeAxis() {
	return (
		<TimeRow>
			<svg width="100%" height="100%">
				{timeTicks.map((x) => (
					<rect key={x} x={px(x)} y="0" width="1" height="4" fill="#5f7d8c" />
				))}
				{timeLabels.map(([label, x]) => (
					<ChartText
						key={x}
						x={px(x)}
						y="21"
						$size={label.length > 2 ? 20 : 18}
						textAnchor="middle"
					>
						{label}
					</ChartText>
				))}
			</svg>
		</TimeRow>
	);
}

function BottomBar() {
	return (
		<Footer>
			<FooterButton aria-label="Share">
				<ShareIcon />
			</FooterButton>
			<FooterButton aria-label="Chat" $w="42px">
				<ChatIcon />
			</FooterButton>
			<FooterButton aria-label="Report">
				<ReportIcon />
			</FooterButton>
			<FooterButton aria-label="Order book">
				<DepthIcon />
			</FooterButton>
			<FooterButton aria-label="Windows">
				<WindowsIcon />
			</FooterButton>
			<FooterButton aria-label="Collapse" $w="24px">
				<Icon w={14} h={16}>
					<path d="M7 2L2 8l5 6M13 2L8 8l5 6" stroke="#3c4b55" strokeWidth="2" />
				</Icon>
			</FooterButton>
			<ScrollBar>
				<ScrollButton aria-label="Scroll left">
					<Icon w={8} h={10}>
						<path d="M6 1L2 5l4 4" stroke="#000" strokeWidth="2" />
					</Icon>
				</ScrollButton>
				<ScrollTrack>
					<ScrollThumb />
				</ScrollTrack>
				<ScrollButton aria-label="Scroll right">
					<Icon w={8} h={10}>
						<path d="M2 1l4 4-4 4" stroke="#000" strokeWidth="2" />
					</Icon>
				</ScrollButton>
			</ScrollBar>
			<FooterButton aria-label="Go to date" $w="50px">
				<CalendarIcon />
			</FooterButton>
			<FooterButton aria-label="Undo" $w="42px">
				<UndoIcon />
			</FooterButton>
			<FooterButton aria-label="Redo" $w="42px">
				<UndoIcon flip />
			</FooterButton>
			<FooterButton aria-label="Chart settings" $w="42px">
				<SettingsIcon />
			</FooterButton>
			<FooterButton aria-label="Fit zoom" $w="42px">
				<ZoomIcon />
			</FooterButton>
			<FooterButton aria-label="Zoom out" $w="42px">
				<ZoomIcon sign="-" />
			</FooterButton>
			<FooterButton aria-label="Zoom in" $w="42px">
				<ZoomIcon sign="+" />
			</FooterButton>
			<FooterButton aria-label="Keyboard" $w="40px">
				<KeyboardIcon />
			</FooterButton>
		</Footer>
	);
}

function App() {
	return (
		<Window>
			<GlobalStyle />
			<TopBar />
			<Body>
				<SideBar />
				<Workspace>
					<ChartRow>
						<Chart />
						<PriceAxis />
					</ChartRow>
					<TimeAxis />
					<BottomBar />
				</Workspace>
			</Body>
		</Window>
	);
}

export default App;

/* ---------- styles ---------- */

const Window = styled.div`
	display: flex;
	flex-direction: column;
	height: 100vh;
	min-height: 1060px;
	overflow: hidden;
	border-bottom: 2px solid #47606e;
`;

const Toolbar = styled.header`
	display: flex;
	flex: none;
	height: 43px;
	border-top: 1px solid #4a74ac;
	border-bottom: 3px solid #4f77ab;
	border-right: 2px solid #4f77ab;
	background: linear-gradient(#acd2ff, #8fb2e0);
	font-size: 18px;
	font-weight: bold;
	white-space: nowrap;
`;

const ToolGroup = styled.div`
	display: flex;
	align-items: center;
	flex: none;
	width: ${({ $w }) => $w || "auto"};
	gap: ${({ $gap }) => $gap || "0"};
	padding-left: ${({ $pad }) => $pad || "5px"};
	border-right: ${({ $last }) => ($last ? "0" : "2px solid #5580b4")};
	${({ $center }) =>
		$center &&
		css`
			justify-content: center;
		`}
`;

const PlainButton = styled.button`
	display: flex;
	align-items: center;
	cursor: pointer;
`;

const Picker = styled.label`
	display: flex;
	align-items: center;
	gap: 10px;

	select {
		appearance: none;
		font-weight: bold;
		outline: none;
	}
`;

const FrameButton = styled.button`
	height: 25px;
	padding: 0 2px;
	border: 2px solid #5580b4;
	border-radius: 4px;
	line-height: 21px;
	background: ${({ $active }) => ($active ? "#809cbe" : "transparent")};
	cursor: pointer;
`;

const Instrument = styled.div`
	display: flex;
	align-items: center;
	gap: 9px;
	padding-bottom: 4px;
	font-weight: normal;

	button {
		margin-top: 6px;
	}
`;

const LastPrice = styled.strong`
	color: #aa000a;
`;

const StatusDot = styled.span`
	width: 15px;
	height: 15px;
	margin: 6px 0 0 2px;
	border: 1px solid #dcebfa;
	border-radius: 50%;
	background: #46a000;
`;

const WindowButtons = styled.div`
	display: flex;
	align-items: center;
	gap: 8px;
	margin-left: auto;
	padding-right: 9px;
`;

const Body = styled.div`
	display: flex;
	flex: 1;
	min-height: 0;
	border-right: 2px solid #47606e;
`;

const Aside = styled.aside`
	display: flex;
	flex-direction: column;
	flex: none;
	width: 51px;
	border-left: 1px solid #47606e;
	border-right: 2px solid #6f8a98;
	background: #9bb9c7;
`;

const CollapseButton = styled.button`
	display: grid;
	place-items: center;
	height: 19px;
	border-bottom: 1px solid #748d99;
`;

const ToolList = styled.ul`
	margin: 4px 0 0;
	padding: 0 0 0 3px;
	list-style: none;
`;

const ToolButton = styled.button`
	display: grid;
	place-items: center;
	width: 42px;
	height: 42px;
	border-radius: 6px;
	cursor: pointer;
	${({ $active }) =>
		$active &&
		css`
			border: 1px solid #6f8791;
			background: #8ea5b2;
		`}
`;

const MoreButton = styled.button`
	display: grid;
	place-items: center;
	height: 22px;
	margin-top: auto;
	border-top: 1px solid #6f8a98;
	border-bottom: 1px solid #6f8a98;
	background: linear-gradient(#a5c3d0, #bedae6);
`;

const SideButton = styled.button`
	display: grid;
	place-items: center;
	height: ${({ $h }) => $h};
	border-top: ${({ $dark }) => ($dark ? "1px solid #6f8a98" : "0")};
	background: ${({ $dark }) => ($dark ? "#8fa3af" : "transparent")};
`;

const Workspace = styled.main`
	display: flex;
	flex-direction: column;
	flex: 1;
	min-width: 0;
`;

const ChartRow = styled.div`
	display: flex;
	flex: 1;
	min-height: 0;
`;

const ChartArea = styled.section`
	position: relative;
	flex: 1;
	min-width: 0;
	border-bottom: 1px solid #6f8a98;
	background: linear-gradient(#ffffff, #d7e3ff);
	overflow: hidden;
`;

const ChartSvg = styled.svg`
	width: 100%;
	height: 100%;
`;

const ChartText = styled.text`
	fill: ${({ $color }) => $color || "#000"};
	font-size: ${({ $size }) => $size || 18}px;
	font-weight: ${({ $weight }) => $weight || "bold"};
`;

const Note = styled.div`
	position: absolute;
	top: ${({ $top }) => $top};
	right: ${({ $right }) => $right};
	padding: ${({ $pad }) => $pad};
	border: 1px solid #4682e6;
	border-radius: 5px;
	background: rgba(248, 250, 255, 0.6);
	font-size: ${({ $size }) => $size};
	line-height: ${({ $line }) => $line};
	font-weight: bold;
	text-align: center;
	white-space: pre;
`;

const PriceColumn = styled.div`
	position: relative;
	display: flex;
	flex-direction: column;
	justify-content: space-between;
	flex: none;
	width: 85px;
	padding: 9px 0 13px;
	border-left: 2px solid #7896a5;
	background: #fff;
`;

const PriceLabel = styled.div`
	display: flex;
	align-items: center;
	gap: 4px;
	height: 24px;
	font-size: ${({ $major }) => ($major ? "20px" : "18px")};
	font-weight: bold;

	&::before {
		content: "";
		width: 5px;
		height: 1px;
		background: #6f8a98;
	}
`;

const PriceTag = styled.div`
	position: absolute;
	top: ${({ $top }) => $top};
	left: 6px;
	width: 76px;
	height: 23px;
	padding-left: 2px;
	border: 1px solid #6482a0;
	border-right-width: 2px;
	background: ${({ $gold }) =>
		$gold ? "linear-gradient(#ffe61e, #f0b414)" : "linear-gradient(#f5f9ff, #c8d5eb)"};
	color: ${({ $color }) => $color || "#000"};
	font-size: 18px;
	line-height: 23px;
	font-weight: bold;
`;

const Countdown = styled.div`
	position: absolute;
	top: 255px;
	left: 5px;
	width: 78px;
	height: 27px;
	padding-left: 4px;
	background: linear-gradient(#a5ffa5, #82dc82);
	font-size: 20px;
	line-height: 30px;
	font-weight: bold;
`;

const TimeRow = styled.div`
	flex: none;
	height: 26px;
	padding-right: 85px;
	background: #fff;
`;

const Footer = styled.footer`
	display: flex;
	align-items: center;
	flex: none;
	height: 40px;
	border-top: 1px solid #7d909b;
	background: #9bb9c7;
`;

const FooterButton = styled.button`
	display: grid;
	place-items: center;
	flex: none;
	width: ${({ $w }) => $w || "40px"};
	height: 38px;
	cursor: pointer;
`;

const ScrollBar = styled.div`
	display: flex;
	flex: 1;
	height: 24px;
	margin: 0 0 2px 2px;
	border: 1px solid #6f8a98;
	border-radius: 3px;
`;

const ScrollButton = styled.button`
	display: grid;
	place-items: center;
	width: 23px;
	background: linear-gradient(#b4d2de, #a5c3d0);
`;

const ScrollTrack = styled.div`
	display: flex;
	justify-content: flex-end;
	flex: 1;
	padding-right: 4px;
	border-left: 2px solid #6f8a98;
	border-right: 2px solid #6f8a98;
`;

const ScrollThumb = styled.div`
	width: 20px;
	border-left: 1px solid #6f8a98;
	border-right: 1px solid #6f8a98;
	background: linear-gradient(#b4d2de, #a5c3d0);
`;
